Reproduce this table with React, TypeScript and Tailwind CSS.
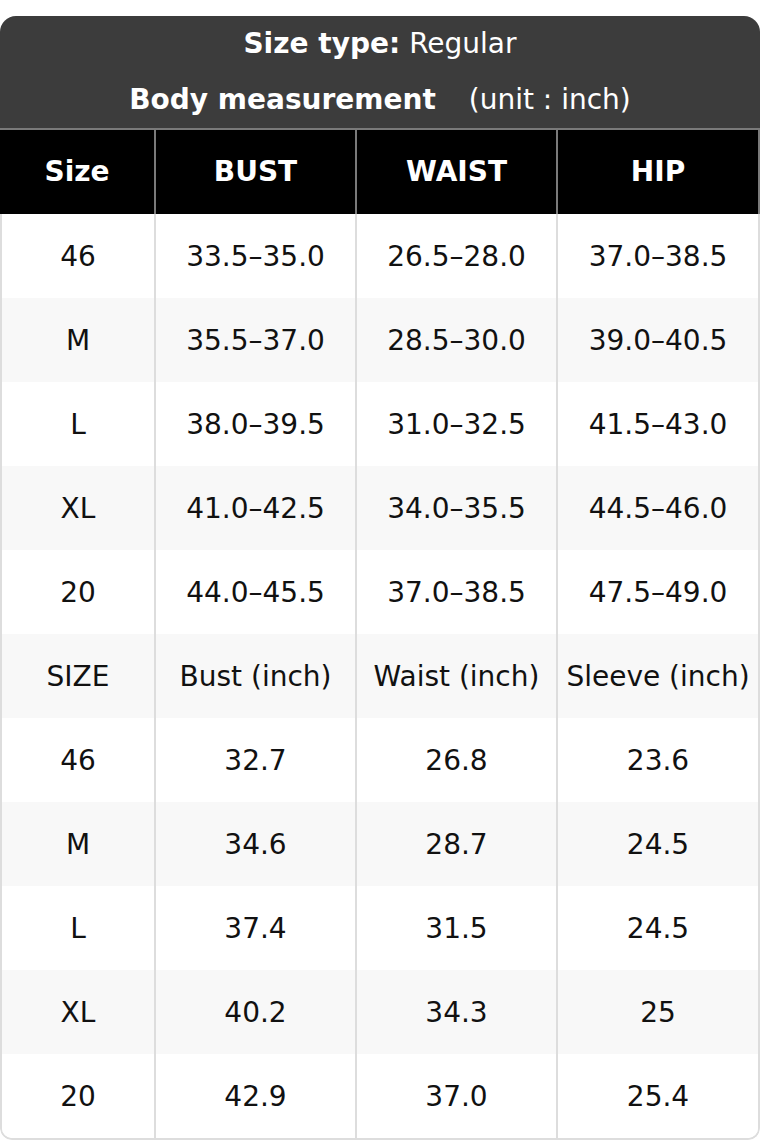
const rows: string[][] = [
  ["46", "33.5–35.0", "26.5–28.0", "37.0–38.5"],
  ["M", "35.5–37.0", "28.5–30.0", "39.0–40.5"],
  ["L", "38.0–39.5", "31.0–32.5", "41.5–43.0"],
  ["XL", "41.0–42.5", "34.0–35.5", "44.5–46.0"],
  ["20", "44.0–45.5", "37.0–38.5", "47.5–49.0"],
  ["SIZE", "Bust (inch)", "Waist (inch)", "Sleeve (inch)"],
  ["46", "32.7", "26.8", "23.6"],
  ["M", "34.6", "28.7", "24.5"],
  ["L", "37.4", "31.5", "24.5"],
  ["XL", "40.2", "34.3", "25"],
  ["20", "42.9", "37.0", "25.4"],
];

const heads = ["Size", "BUST", "WAIST", "HIP"];

const App = () => {
  return (
    <div className="w-[760px] bg-white pt-[16px] font-['DejaVu_Sans',sans-serif] text-[28px] leading-none">
      <div className="rounded-t-[16px] rounded-b-[12px] overflow-hidden">
        <div className="bg-[#3c3c3c] text-white text-center">
          <div className="h-[56px] flex items-center justify-center">
            <span className="font-bold">Size type:</span>
            <span className="ml-[9px]">Regular</span>
          </div>
          <div className="h-[56px] flex items-center justify-center">
            <span className="font-bold">Body measurement</span>
            <span className="ml-[33px]">(unit : inch)</span>
          </div>
        </div>

        <div className="grid grid-cols-[154px_201px_201px_1fr] bg-black text-white font-bold border-t-2 border-r-2 border-[#7a7a7a]">
          {heads.map((h, i) => (
            <div
              key={h}
              className={`h-[84px] flex items-center justify-center ${i > 0 ? "border-l-2 border-[#7a7a7a]" : ""}`}
            >
              {h}
            </div>
          ))}
        </div>

        <div className="border-x-2 border-b-2 border-[#dddddd] rounded-b-[12px] overflow-hidden text-[#111]">
          {rows.map((r, ri) => (
            <div
              key={ri}
              className={`grid grid-cols-[152px_201px_201px_1fr] ${ri % 2 === 1 ? "bg-[#f8f8f8]" : "bg-white"}`}
            >
              {r.map((c, ci) => (
                <div
                  key={ci}
                  className={`h-[84px] flex items-center justify-center whitespace-nowrap pt-[1px] ${ci > 0 ? "border-l-2 border-[#dddddd]" : ""}`}
                >
                  {c}
                </div>
              ))}
            </div>
          ))}
        </div>
      </div>
    </div>
  );
};

export default App;
